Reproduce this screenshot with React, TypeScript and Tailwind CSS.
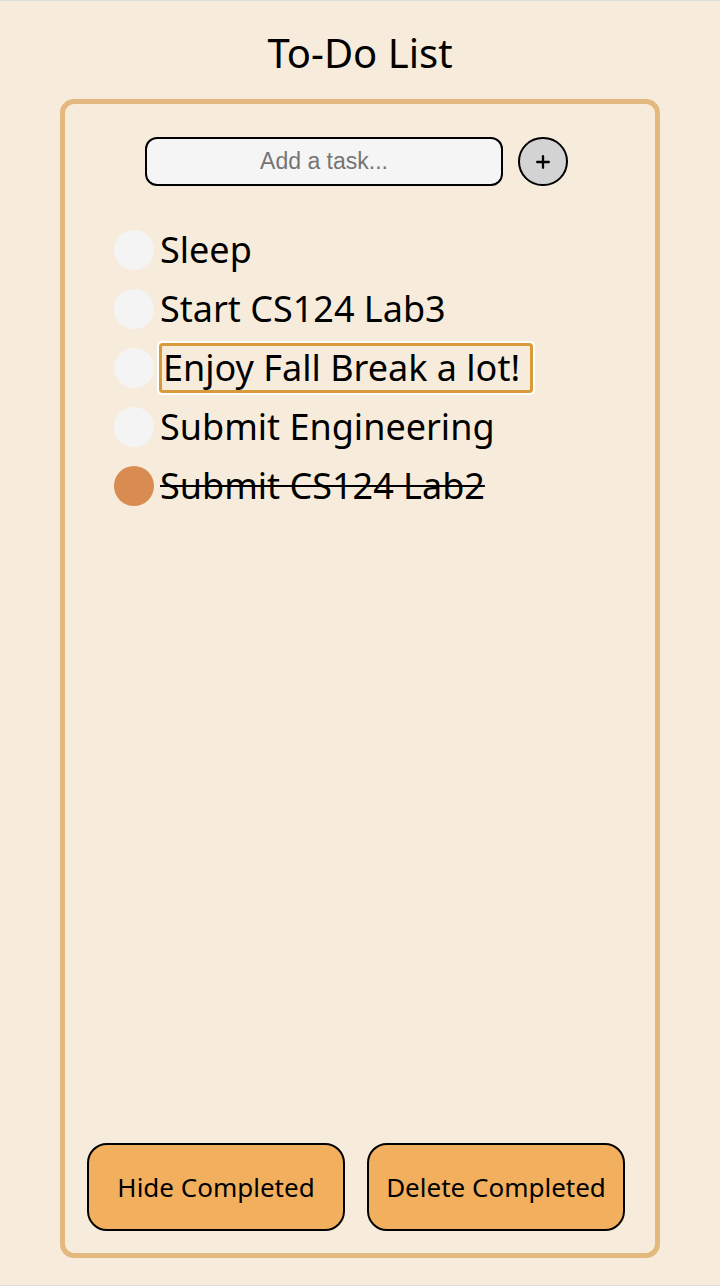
import { Plus } from 'lucide-react'

interface Task {
  text: string
  done: boolean
  editing?: boolean
}

const tasks: Task[] = [
  { text: 'Sleep', done: false },
  { text: 'Start CS124 Lab3', done: false },
  { text: 'Enjoy Fall Break a lot!', done: false, editing: true },
  { text: 'Submit Engineering', done: false },
  { text: 'Submit CS124 Lab2', done: true },
]

function TaskRow({ task }: { task: Task }) {
  return (
    <div className="flex items-center h-[59px]">
      <div
        className={
          task.done
            ? 'w-10 h-10 rounded-full bg-[#d98c52] shrink-0'
            : 'w-10 h-10 rounded-full bg-[#f4f4f4] shrink-0'
        }
      />
      {task.editing ? (
        <div className="ml-[3px] rounded-[5px] border-2 border-white">
          <div className="rounded-[4px] border-[3px] border-[#d99a3a] pl-[1px] pr-[10px] leading-[44px] text-[36px] text-black">
            {task.text}
          </div>
        </div>
      ) : (
        <span
          className={
            task.done
              ? 'ml-[6px] text-[36px] text-black line-through decoration-2'
              : 'ml-[6px] text-[36px] text-black'
          }
        >
          {task.text}
        </span>
      )}
    </div>
  )
}

export default function App() {
  return (
    <div
      className="min-h-[1286px] bg-[#f7ecdb] border-t border-b border-[#dcdcdc] flex flex-col items-center"
      style={{ fontFamily: '"Noto Sans", sans-serif' }}
    >
      <h1 className="mt-[27px] text-[40px] leading-[50px] text-black">To-Do List</h1>

      <div className="mt-[21px] w-[600px] h-[1159px] border-[5px] border-[#e3b97f] rounded-[14px] flex flex-col">
        <div className="mt-[33px] flex items-center pl-[80px] gap-[15px]">
          <div className="w-[358px] h-[49px] rounded-[12px] border-2 border-black bg-[#f5f5f5] flex items-center justify-center">
            <span className="text-[23px] text-[#757575]" style={{ fontFamily: '"Liberation Sans", Arial, sans-serif' }}>
              Add a task...
            </span>
          </div>
          <button className="w-[50px] h-[49px] rounded-full border-2 border-black bg-[#d3d3d3] flex items-center justify-center">
            <Plus className="w-5 h-5 text-black" strokeWidth={2.75} />
          </button>
        </div>

        <div className="mt-[34px] pl-[49px] flex flex-col">
          {tasks.map((t, i) => (
            <TaskRow key={i} task={t} />
          ))}
        </div>

        <div className="flex-1" />

        <div className="flex pl-[22px] gap-[22px] mb-[22px]">
          <button className="w-[258px] h-[88px] rounded-[20px] border-2 border-black bg-[#f2b05e] text-[26px] text-black">
            Hide Completed
          </button>
          <button className="w-[258px] h-[88px] rounded-[20px] border-2 border-black bg-[#f2b05e] text-[26px] text-black">
            Delete Completed
          </button>
        </div>
      </div>
    </div>
  )
}
